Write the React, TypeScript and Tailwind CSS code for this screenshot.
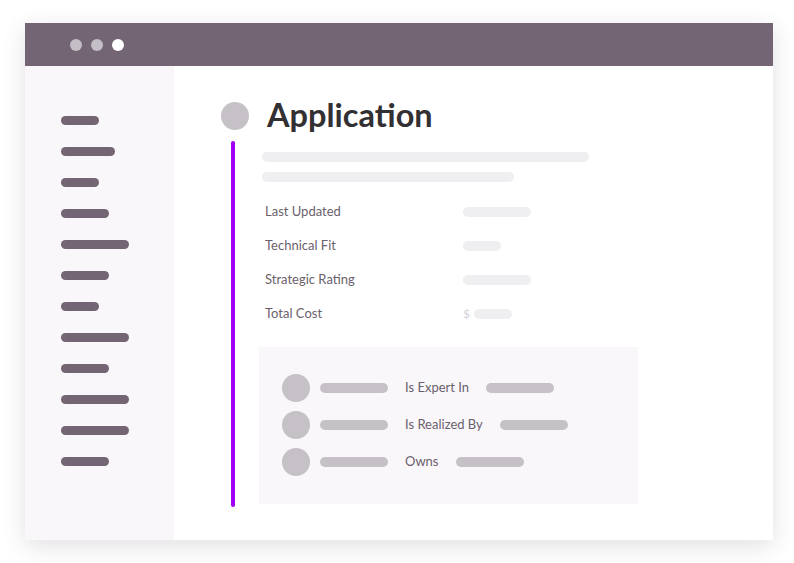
import React from 'react';

const sideBars = [38, 54, 38, 48, 68, 48, 38, 68, 48, 68, 68, 48];

const fields = [
    { label: 'Last Updated', width: 68 },
    { label: 'Technical Fit', width: 38 },
    { label: 'Strategic Rating', width: 68 },
    { label: 'Total Cost', width: 38, currency: true },
];

const relations = [
    { label: 'Is Expert In' },
    { label: 'Is Realized By' },
    { label: 'Owns' },
];

export default function App() {
    return (
        <div className="w-[794px] h-[563px] bg-white pt-[23px] pl-[25px]" style={{ fontFamily: 'Lato, "Noto Sans", sans-serif' }}>
            <div className="w-[748px] h-[517px] flex flex-col bg-white shadow-[0_6px_22px_rgba(60,40,60,0.14)]">
                {/* Title bar */}
                <div className="h-[43px] bg-[#736574] flex items-center pl-[45px] gap-[9px] shrink-0">
                    <span className="w-[12px] h-[12px] rounded-full bg-[#c4bec6]" />
                    <span className="w-[12px] h-[12px] rounded-full bg-[#c4bec6]" />
                    <span className="w-[12px] h-[12px] rounded-full bg-white" />
                </div>

                <div className="flex flex-1">
                    {/* Sidebar */}
                    <div className="w-[149px] bg-[#f9f7fa] pl-[36px] pt-[50px] flex flex-col gap-[22px]">
                        {sideBars.map((w, i) => (
                            <div key={i} className="h-[9px] rounded-full bg-[#736574]" style={{ width: w }} />
                        ))}
                    </div>

                    {/* Main */}
                    <div className="flex-1 pl-[47px] pt-[36px]">
                        <div className="flex items-center gap-[18px]">
                            <div className="w-[28px] h-[28px] rounded-full bg-[#c6c1c7]" />
                            <h1 className="text-[32.5px] leading-[28px] font-bold text-[#333033] -mt-[3px]">Application</h1>
                        </div>

                        <div className="flex mt-[11px]">
                            <div className="ml-[10px] w-[4px] h-[366px] rounded-full bg-[#a100f5]" />

                            <div className="ml-[27px] pt-[11px] flex flex-col">
                                <div className="w-[327px] h-[10px] rounded-full bg-[#efeef1]" />
                                <div className="w-[252px] h-[10px] rounded-full bg-[#efeef1] mt-[10px]" />

                                <div className="mt-[13px] flex flex-col">
                                    {fields.map((f) => (
                                        <div key={f.label} className="h-[34px] flex items-center">
                                            <span className="w-[201px] pl-[3px] text-[13px] text-[#6b5f6c]">{f.label}</span>
                                            {f.currency ? (
                                                <div className="flex items-center gap-[4px]">
                                                    <span className="text-[12px] text-[#d6d2d7]">$</span>
                                                    <div className="h-[10px] rounded-full bg-[#efeef1]" style={{ width: f.width }} />
                                                </div>
                                            ) : (
                                                <div className="h-[10px] rounded-full bg-[#efeef1]" style={{ width: f.width }} />
                                            )}
                                        </div>
                                    ))}
                                </div>

                                <div className="mt-[16px] -ml-[3px] w-[379px] h-[157px] bg-[#f9f7fa] pl-[23px] pt-[27px] flex flex-col gap-[9px]">
                                    {relations.map((r) => (
                                        <div key={r.label} className="flex items-center h-[28px]">
                                            <div className="w-[28px] h-[28px] rounded-full bg-[#c6c1c7]" />
                                            <div className="ml-[10px] w-[68px] h-[10px] rounded-full bg-[#c6c1c7]" />
                                            <span className="ml-[17px] text-[13px] text-[#6b5f6c]">{r.label}</span>
                                            <div className="ml-[17px] w-[68px] h-[10px] rounded-full bg-[#c6c1c7]" />
                                        </div>
                                    ))}
                                </div>
                            </div>
                        </div>
                    </div>
                </div>
            </div>
        </div>
    );
}
